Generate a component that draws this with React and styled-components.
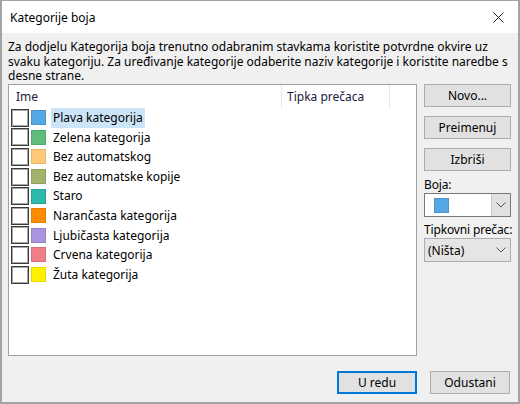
import React from "react";
import styled, { createGlobalStyle } from "styled-components";

const GlobalStyle = createGlobalStyle`
  html, body {
    margin: 0;
    padding: 0;
    background: #ffffff;
  }
  * {
    box-sizing: border-box;
  }
`;

const Window = styled.div`
  width: 520px;
  height: 404px;
  display: flex;
  flex-direction: column;
  background: #f0f0f0;
  border: 2px solid #a3a3a3;
  border-top-width: 1px;
  font-family: "Noto Sans", "Open Sans", sans-serif;
  font-size: 12px;
  color: #000;
`;

const TitleBar = styled.div`
  height: 32px;
  flex: none;
  display: flex;
  align-items: center;
  justify-content: space-between;
  padding: 0 14px 0 8px;
  background: #ffffff;
  font-size: 12px;
`;

const Body = styled.div`
  flex: 1;
  display: flex;
  flex-direction: column;
  padding: 7px 7px 8px 6px;
`;

const Description = styled.div`
  line-height: 14.5px;
  white-space: nowrap;
  height: 44px;
`;

const Main = styled.div`
  display: flex;
  gap: 7px;
  height: 272px;
`;

const ListBox = styled.div`
  width: 409px;
  height: 100%;
  background: #ffffff;
  border: 1px solid #a0a0a0;
  display: flex;
  flex-direction: column;
`;

const HeaderRow = styled.div`
  display: flex;
  height: 23px;
  align-items: center;
  color: #1b1b3f;
`;

const HeaderCell = styled.div`
  width: ${(p) => p.$width}px;
  height: 100%;
  display: flex;
  align-items: center;
  padding-left: ${(p) => p.$pad}px;
  border-right: ${(p) => (p.$sep ? "1px solid #e5e5e5" : "none")};
`;

const Row = styled.div`
  display: flex;
  align-items: center;
  height: 19.6px;
  padding-left: 2px;
`;

const Check = styled.span`
  width: 18px;
  height: 18px;
  flex: none;
  background: #fff;
  border: 1px solid #3a3a3a;
  box-shadow: inset 0 0 0 1px #a8a8a8;
`;

const Swatch = styled.span`
  width: 15px;
  height: 15px;
  flex: none;
  margin-left: 2px;
  background: ${(p) => p.$color};
  border: 1px solid ${(p) => p.$edge};
`;

const Label = styled.span`
  margin-left: 5px;
  padding: 0 2px;
  line-height: 19.6px;
  background: ${(p) => (p.$selected ? "#cce4f7" : "transparent")};
`;

const Side = styled.div`
  width: 87px;
  display: flex;
  flex-direction: column;
`;

const Button = styled.button`
  width: ${(p) => p.$width || 87}px;
  height: 23px;
  margin-bottom: ${(p) => p.$gap || 0}px;
  padding: 0;
  font: inherit;
  color: #000;
  background: #e1e1e1;
  border: ${(p) => (p.$primary ? "2px solid #0078d7" : "1px solid #adadad")};
`;

const FieldLabel = styled.div`
  height: 17px;
  line-height: 17px;
  white-space: nowrap;
  letter-spacing: -0.15px;
  margin-top: ${(p) => p.$top || 0}px;
`;

const Combo = styled.div`
  height: 24px;
  display: flex;
  align-items: center;
  border: 1px solid ${(p) => (p.$plain ? "#adadad" : "#7a7a7a")};
  background: ${(p) => (p.$plain ? "#e5e5e5" : "#ffffff")};
`;

const ComboValue = styled.div`
  flex: 1;
  display: flex;
  align-items: center;
  padding-left: ${(p) => p.$pad}px;
`;

const ComboArrow = styled.div`
  width: 19px;
  height: 100%;
  display: flex;
  align-items: center;
  justify-content: center;
  background: ${(p) => (p.$boxed ? "#e1e1e1" : "transparent")};
  border-left: ${(p) => (p.$boxed ? "1px solid #c8c8c8" : "none")};
`;

const Footer = styled.div`
  display: flex;
  justify-content: flex-end;
  gap: 13px;
  margin-top: 15px;
  padding-right: 1px;
`;

const categories = [
  { name: "Plava kategorija", color: "#55a7e6", edge: "#4a93cc", selected: true },
  { name: "Zelena kategorija", color: "#5ebd79", edge: "#52a86a" },
  { name: "Bez automatskog", color: "#ffca78", edge: "#e8b56a" },
  { name: "Bez automatske kopije", color: "#a4b36b", edge: "#92a05f" },
  { name: "Staro", color: "#2fb8ac", edge: "#29a398" },
  { name: "Narančasta kategorija", color: "#ff8c00", edge: "#e67e00" },
  { name: "Ljubičasta kategorija", color: "#a995df", edge: "#9784c8" },
  { name: "Crvena kategorija", color: "#f07d88", edge: "#d96f79" },
  { name: "Žuta kategorija", color: "#fff100", edge: "#e6d900" },
];

const Chevron = () => (
  <svg width="10" height="6" viewBox="0 0 10 6">
    <path d="M0.5 0.5 L5 5 L9.5 0.5" fill="none" stroke="#555" strokeWidth="1" />
  </svg>
);

export default function App() {
  return (
    <>
      <GlobalStyle />
      <Window>
        <TitleBar>
          <span>Kategorije boja</span>
          <svg width="11" height="11" viewBox="0 0 11 11">
            <path d="M0.5 0.5 L10.5 10.5 M10.5 0.5 L0.5 10.5" stroke="#222" strokeWidth="1" />
          </svg>
        </TitleBar>
        <Body>
          <Description>
            Za dodjelu Kategorija boja trenutno odabranim stavkama koristite potvrdne okvire uz
            <br />
            svaku kategoriju. Za uređivanje kategorije odaberite naziv kategorije i koristite naredbe s
            <br />
            desne strane.
          </Description>
          <Main>
            <ListBox>
              <HeaderRow>
                <HeaderCell $width={273} $pad={7} $sep>
                  Ime
                </HeaderCell>
                <HeaderCell $width={108} $pad={5} $sep>
                  Tipka prečaca
                </HeaderCell>
              </HeaderRow>
              {categories.map((c) => (
                <Row key={c.name}>
                  <Check />
                  <Swatch $color={c.color} $edge={c.edge} />
                  <Label $selected={c.selected}>{c.name}</Label>
                </Row>
              ))}
            </ListBox>
            <Side>
              <Button $gap={9}>Novo...</Button>
              <Button $gap={9}>Preimenuj</Button>
              <Button>Izbriši</Button>
              <FieldLabel $top={5}>Boja:</FieldLabel>
              <Combo>
                <ComboValue $pad={7}>
                  <Swatch $color="#55a7e6" $edge="#4a93cc" />
                </ComboValue>
                <ComboArrow $boxed>
                  <Chevron />
                </ComboArrow>
              </Combo>
              <FieldLabel $top={4}>Tipkovni prečac:</FieldLabel>
              <Combo $plain>
                <ComboValue $pad={3}>(Ništa)</ComboValue>
                <ComboArrow>
                  <Chevron />
                </ComboArrow>
              </Combo>
            </Side>
          </Main>
          <Footer>
            <Button $primary $width={80}>
              U redu
            </Button>
            <Button $width={80}>Odustani</Button>
          </Footer>
        </Body>
      </Window>
    </>
  );
}
